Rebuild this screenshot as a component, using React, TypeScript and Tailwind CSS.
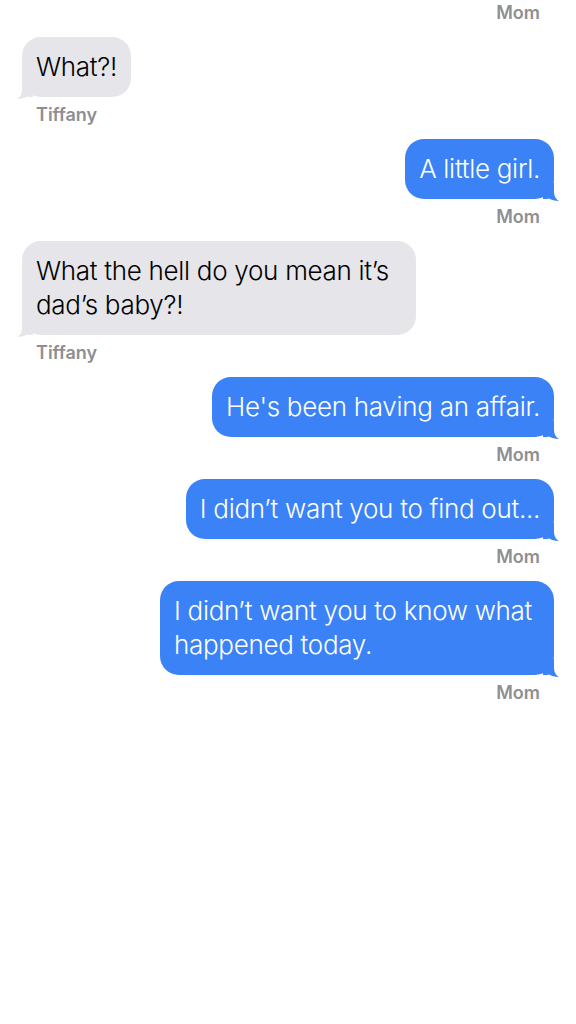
import React from 'react';

type Side = 'left' | 'right';

interface Msg {
  side: Side;
  text: string;
  name: string;
}

const MESSAGES: Msg[] = [
  { side: 'left', text: 'What?!', name: 'Tiffany' },
  { side: 'right', text: 'A little girl.', name: 'Mom' },
  { side: 'left', text: 'What the hell do you mean it’s dad’s baby?!', name: 'Tiffany' },
  { side: 'right', text: "He's been having an affair.", name: 'Mom' },
  { side: 'right', text: 'I didn’t want you to find out...', name: 'Mom' },
  { side: 'right', text: 'I didn’t want you to know what happened today.', name: 'Mom' },
];

const Label = ({ side, name, className = '' }: { side: Side; name: string; className?: string }) => (
  <div
    className={`h-5 text-[18px] leading-5 font-semibold text-[#8e8e93] ${
      side === 'right' ? 'self-end mr-[14px]' : 'self-start ml-[14px]'
    } ${className}`}
  >
    {name}
  </div>
);

const Bubble = ({ side, text }: { side: Side; text: string }) => {
  const me = side === 'right';
  return (
    <div
      className={`relative max-w-[394px] rounded-[19px] px-[14px] py-[13px] text-[26px] leading-[34px] font-light tracking-[-0.3px] ${
        me ? 'self-end bg-[#3b82f6] text-white' : 'self-start bg-[#e5e5ea] text-black'
      }`}
    >
      {text}
      <svg
        width="16"
        height="18"
        viewBox="0 0 16 18"
        className={`absolute -bottom-[2px] ${
          me ? '-right-[5px] fill-[#3b82f6]' : '-left-[5px] -scale-x-100 fill-[#e5e5ea]'
        }`}
      >
        <path d="M0 0 H11 V9 C11 13 13 16.5 16 18 C12 18 8.5 17 6 15.5 C5 16 3 16 0 16 Z" />
      </svg>
    </div>
  );
};

export default function App() {
  return (
    <div
      className="min-h-[1024px] w-full bg-white px-[22px] pt-[3px]"
      style={{ fontFamily: 'Inter, "Noto Sans", sans-serif' }}
    >
      <div className="flex flex-col">
        <Label side="right" name="Mom" />
        {MESSAGES.map((m, i) => (
          <div key={i} className="mt-[14px] flex flex-col">
            <Bubble side={m.side} text={m.text} />
            <Label side={m.side} name={m.name} className="mt-2" />
          </div>
        ))}
      </div>
    </div>
  );
}
